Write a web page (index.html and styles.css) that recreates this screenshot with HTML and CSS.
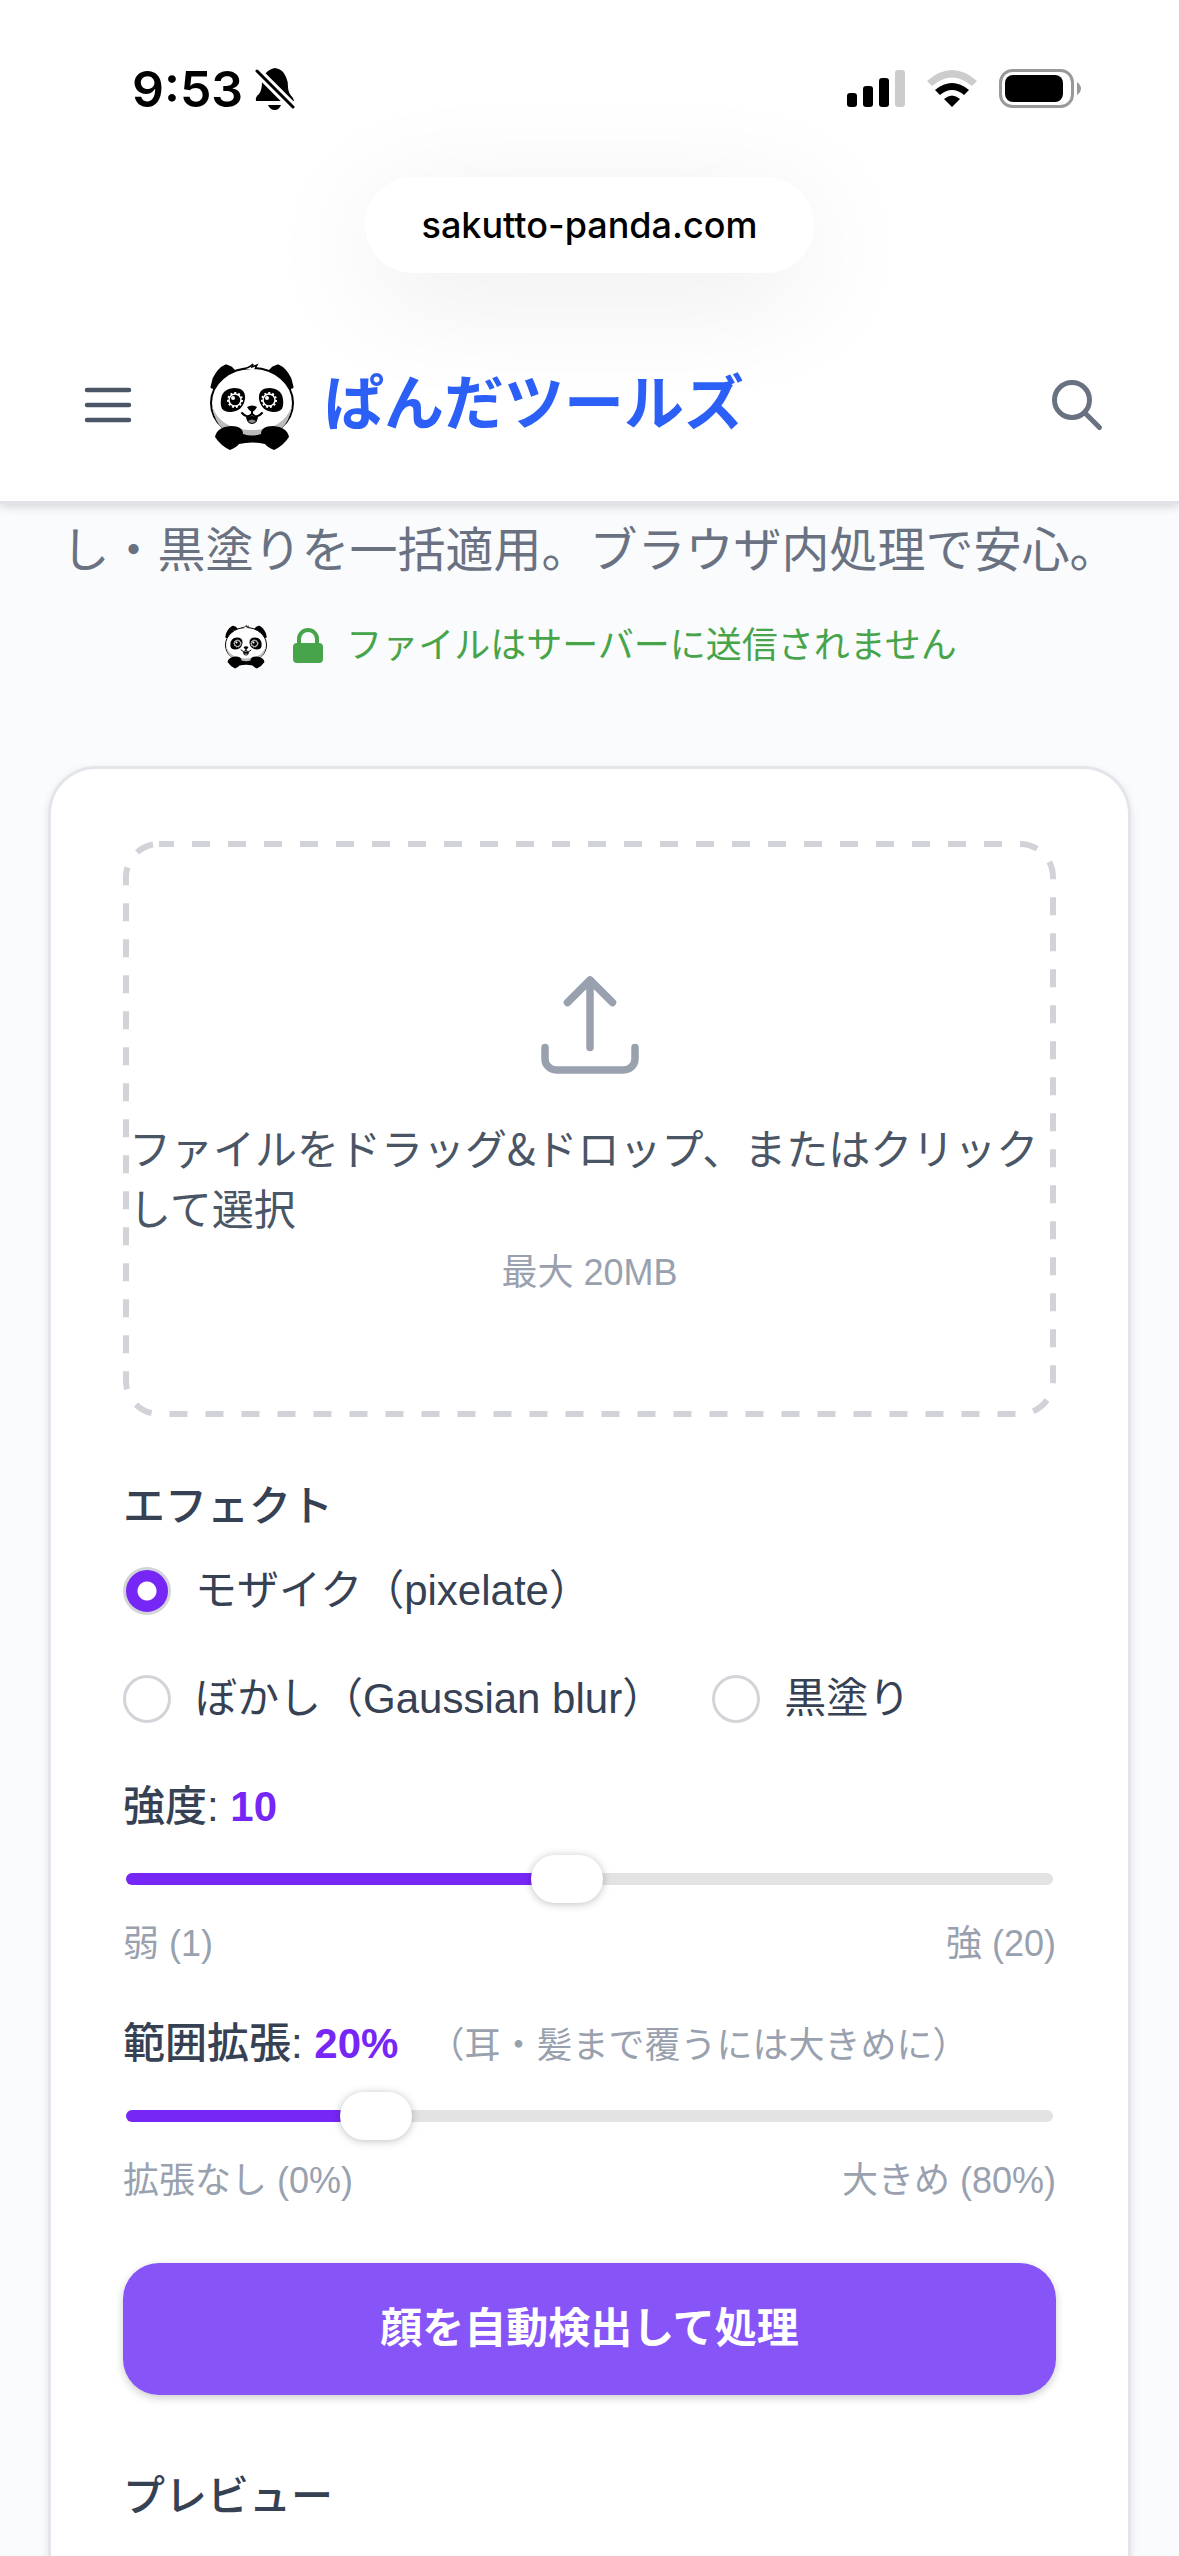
FILE: index.html
```html
<!DOCTYPE html>
<html lang="ja">
<head>
    <meta charset="UTF-8">
    <meta name="viewport" content="width=device-width, initial-scale=1.0">
    <title>ぱんだツールズ</title>
    <link rel="stylesheet" href="styles.css">
</head>
<body>
    <!-- Shared panda artwork -->
    <svg class="sprite" aria-hidden="true">
        <symbol id="panda" viewBox="0 0 96 96">
            <path d="M8 30 L10 22 Q15 12 22 9 L27 11 L30 14 L15 32 Z M88 30 L86 22 Q81 12 74 9 L69 11 L66 14 L81 32 Z" fill="#000" stroke="#000" stroke-width="3" stroke-linejoin="round"/>
            <ellipse cx="48" cy="46" rx="41" ry="35" fill="#fff" stroke="#000" stroke-width="2"/>
            <path d="M8 49 Q13 82 48 80 Q83 82 88 49 Q79 73 48 73 Q17 73 8 49Z" fill="#bbb"/>
            <path d="M39 12 Q45 11 49 7 L48 10 L53 8 L51 12" fill="#fff" stroke="#000" stroke-width="1.5"/>
            <path d="M17 49 Q15 32 30 31 Q42 31 41 42 Q39 54 27 55 Q18 55 17 49Z M79 49 Q81 32 66 31 Q54 31 55 42 Q57 54 69 55 Q78 55 79 49Z" fill="#000"/>
            <g fill="#000" stroke="#fff" stroke-width="1.5">
                <circle cx="31" cy="43" r="6"/>
                <circle cx="65" cy="43" r="6"/>
            </g>
            <g fill="none" stroke="#fff" stroke-width="2" stroke-dasharray="2 2">
                <circle cx="31" cy="43" r="7"/>
                <circle cx="65" cy="43" r="7"/>
            </g>
            <circle cx="29" cy="41" r="2" fill="#fff"/>
            <circle cx="63" cy="41" r="2" fill="#fff"/>
            <path d="M43 50 Q48 47 53 50 Q51 54 48 55 Q45 54 43 50Z" fill="#000"/>
            <path d="M48 54 V57 Q43 62 38 56 M48 57 Q53 62 58 56" fill="none" stroke="#000" stroke-width="2" stroke-linecap="round"/>
            <path d="M42 60 Q48 58 54 60 Q53 67 48 67 Q43 67 42 60Z" fill="#000"/>
            <path d="M44 64 Q48 61 52 64 Q48 68 44 64Z" fill="#888"/>
            <path d="M11 80 Q13 70 27 69 Q39 69 39 77 Q48 80 57 77 Q57 69 69 69 Q83 70 85 80 Q79 89 70 93 Q63 90 61 87 Q48 84 35 87 Q33 90 26 93 Q17 89 11 80Z" fill="#000"/>
        </symbol>
    </svg>

    <div class="top">
        <div class="status-bar">
            <div class="status-time">
                <span>9:53</span>
                <svg width="40" height="44" viewBox="0 0 40 44" aria-hidden="true">
                    <path d="M10 7 Q14 2 20 1 Q28 2 31 10 Q33 14 33 20 Q33 26 38 31 L39 34 H1 Q0 30 4 27 Q7 23 7 15 Z M13 38 H26 Q24 43 20 43 Q15 43 13 38Z"/>
                    <path d="M1 3 L38 40" stroke="#fff" stroke-width="9"/>
                    <path d="M2 4 L38 40" stroke="#000" stroke-width="3" stroke-linecap="round"/>
                </svg>
            </div>
            <div class="status-icons">
                <svg width="58" height="38" viewBox="0 0 58 38" aria-hidden="true">
                    <rect x="0" y="23" width="10" height="14" rx="3"/>
                    <rect x="16" y="16" width="10" height="21" rx="3"/>
                    <rect x="32" y="8" width="10" height="29" rx="3"/>
                    <rect x="48" y="0" width="10" height="37" rx="3" fill="#ccc"/>
                </svg>
                <svg width="50" height="38" viewBox="0 0 50 38" aria-hidden="true">
                    <path d="M0 11 Q25 -11 50 11 L45 16 Q25 -1 5 16Z" fill="#ccc"/>
                    <path d="M8 20 Q25 6 42 20 L37 25 Q25 15 13 25Z"/>
                    <path d="M17 29 Q25 22 33 29 L25 37Z"/>
                </svg>
                <svg width="83" height="40" viewBox="0 0 83 40" aria-hidden="true">
                    <rect x="1.5" y="1.5" width="72" height="36" rx="12" fill="none" stroke="#999" stroke-width="3"/>
                    <rect x="6" y="6" width="58" height="27" rx="8"/>
                    <path d="M78 13 Q82 16 82 19.500 Q82 23 78 26Z" fill="#999"/>
                </svg>
            </div>
        </div>

        <div class="url-pill">sakutto-panda.com</div>

        <header class="site-header">
            <button class="icon-btn" aria-label="メニュー">
                <svg width="72" height="72" viewBox="0 0 24 24" fill="none" stroke="#4a5565" stroke-width="1.5" stroke-linecap="round"><path d="M5 7h14M5 12h14M5 17h14"/></svg>
            </button>
            <a class="brand" href="#">
                <svg class="brand-logo" aria-hidden="true"><use href="#panda"/></svg>
                <span>ぱんだツールズ</span>
            </a>
            <button class="icon-btn" aria-label="検索">
                <svg width="60" height="60" viewBox="0 0 24 24" fill="none" stroke="#6a7282" stroke-width="2" stroke-linecap="round" stroke-linejoin="round"><path d="M21 21l-6-6m2-5a7 7 0 11-14 0 7 7 0 0114 0z"/></svg>
            </button>
        </header>
    </div>

    <main>
        <p class="intro">し・黒塗りを一括適用。ブラウザ内処理で安心。</p>
        <p class="notice">
            <svg class="notice-panda" aria-hidden="true"><use href="#panda"/></svg>
            <svg width="32" height="36" viewBox="0 0 32 36" aria-hidden="true">
                <path d="M7 16 V11 a9 9 0 0 1 18 0 V16" fill="none" stroke="#47a44a" stroke-width="4"/>
                <rect x="1" y="15" width="30" height="20" rx="4" fill="#47a44a"/>
            </svg>
            <span>ファイルはサーバーに送信されません</span>
        </p>

        <div class="card">
            <div class="dropzone">
                <svg class="dropzone-border" aria-hidden="true"><rect x="3" y="3" rx="33"/></svg>
                <svg width="120" height="120" viewBox="0 0 24 24" fill="none" stroke="#99a1af" stroke-width="1.5" stroke-linecap="round" stroke-linejoin="round" aria-hidden="true">
                    <path d="M3 16.500v2.250A2.250 2.250 0 005.250 21h13.500A2.250 2.250 0 0021 18.750V16.500m-13.500-9L12 3m0 0l4.500 4.500M12 3v13.500"/>
                </svg>
                <p class="dropzone-text">ファイルをドラッグ&amp;ドロップ、またはクリックして選択</p>
                <p class="dropzone-hint">最大 20MB</p>
            </div>

            <fieldset class="effects">
                <legend>エフェクト</legend>
                <div class="radio-row">
                    <label><input type="radio" name="effect" checked>モザイク（pixelate）</label>
                    <label><input type="radio" name="effect">ぼかし（Gaussian blur）</label>
                    <label><input type="radio" name="effect">黒塗り</label>
                </div>
            </fieldset>

            <div class="field">
                <label for="strength">強度: <b>10</b></label>
                <input class="strength" type="range" id="strength" min="1" max="20" value="10">
                <div class="scale"><span>弱 (1)</span><span>強 (20)</span></div>
            </div>

            <div class="field">
                <label for="expand">範囲拡張: <b>20%</b><small>（耳・髪まで覆うには大きめに）</small></label>
                <input class="expand" type="range" id="expand" min="0" max="80" value="20">
                <div class="scale"><span>拡張なし (0%)</span><span>大きめ (80%)</span></div>
            </div>

            <button class="run-btn">顔を自動検出して処理</button>

            <h2>プレビュー</h2>
        </div>
    </main>
</body>
</html>
```
FILE: styles.css
```css
* {
    box-sizing: border-box;
}
body {
    display: flex;
    flex-direction: column;
    min-height: 100vh;
    margin: 0;
    background-color: #f9fbfd;
    color: #364153;
    font-family: "Liberation Sans", "Noto Sans CJK JP", sans-serif;
    font-size: 42px;
    line-height: 60px;
}
p, h2 {
    margin: 0;
}
svg {
    display: block;
    flex-shrink: 0;
}
button {
    padding: 0;
    border: none;
    background: none;
    font-family: inherit;
    cursor: pointer;
}
.sprite {
    position: absolute;
    width: 0;
    height: 0;
}

/* Top of the screen */
.top {
    background-color: #fff;
    border-bottom: 3px solid #e2e3e9;
    box-shadow: 0 3px 9px rgba(0, 0, 0, 0.15);
    z-index: 1;
}
.status-bar {
    display: flex;
    justify-content: space-between;
    align-items: center;
    height: 177px;
    padding: 0 97px 0 132px;
}
.status-time, .status-icons {
    display: flex;
    align-items: center;
}
.status-time {
    gap: 12px;
    color: #000;
    font-family: Inter, sans-serif;
    font-size: 50px;
    font-weight: 600;
}
.status-icons {
    gap: 22px;
}
.url-pill {
    width: fit-content;
    margin: 0 auto;
    padding: 18px 57px;
    border-radius: 48px;
    background-color: #fff;
    box-shadow: 0 24px 120px rgba(0, 0, 0, 0.08);
    color: #000;
    font-family: Inter, sans-serif;
    font-size: 36px;
    font-weight: 500;
}
.site-header {
    display: flex;
    align-items: center;
    height: 228px;
    padding: 36px 72px 0;
}
.brand {
    display: flex;
    align-items: center;
    gap: 24px;
    flex: 1;
    margin-left: 60px;
    color: #2b5ff5;
    font-size: 60px;
    font-weight: 700;
    text-decoration: none;
}
.brand-logo {
    width: 96px;
    height: 96px;
}

/* Intro */
main {
    display: flex;
    flex-direction: column;
    flex: 1;
    padding: 8px 48px 0;
}
.intro {
    color: #6a7282;
    font-size: 48px;
    line-height: 78px;
    text-align: center;
    white-space: nowrap;
}
.notice {
    display: flex;
    justify-content: center;
    align-items: center;
    gap: 22px;
    margin-top: 32px;
    color: #47a44a;
    font-size: 36px;
    line-height: 48px;
}
.notice-panda {
    width: 48px;
    height: 48px;
}

/* Tool card */
.card {
    flex: 1;
    margin-top: 96px;
    padding: 72px;
    border: 3px solid #e4e5ea;
    border-bottom: none;
    border-radius: 48px 48px 0 0;
    background-color: #fff;
    box-shadow: 0 3px 9px rgba(0, 0, 0, 0.1);
}
.dropzone {
    position: relative;
    display: flex;
    flex-direction: column;
    align-items: center;
    justify-content: center;
    height: 576px;
    padding: 4px 6px 0;
}
.dropzone-border {
    position: absolute;
    inset: 0;
    width: 100%;
    height: 100%;
}
.dropzone-border rect {
    width: calc(100% - 6px);
    height: calc(100% - 6px);
    fill: none;
    stroke: #d1d3d9;
    stroke-width: 6px;
    stroke-dasharray: 18px 18px;
    stroke-dashoffset: 3px;
}
.dropzone-text {
    margin-top: 32px;
    color: #4a5565;
    font-family: "Noto Sans CJK JP", sans-serif;
}
.dropzone-hint {
    margin-top: 12px;
    color: #99a1af;
    font-size: 36px;
    line-height: 48px;
}
.effects {
    margin: 60px 0 0;
    padding: 0;
    border: none;
}
.effects legend {
    padding: 0;
    font-weight: 500;
}
.radio-row {
    display: flex;
    flex-wrap: wrap;
    gap: 48px;
    margin-top: 24px;
}
.radio-row label {
    display: flex;
    align-items: center;
    gap: 24px;
}
/* keeps the first option on a line of its own */
.radio-row label:first-child {
    margin-right: 96px;
}
.radio-row input {
    appearance: none;
    width: 48px;
    height: 48px;
    margin: 0;
    border: 3px solid #d3d4d9;
    border-radius: 50%;
    background-color: #fff;
}
.radio-row input:checked {
    background: radial-gradient(circle, #fff 9px, #7727f5 10px);
}
.field {
    margin-top: 46px;
}
.effects + .field {
    margin-top: 48px;
}
.field label {
    display: block;
    height: 60px;
    font-weight: 500;
}
.field b {
    color: #7727f5;
    font-weight: 700;
}
.field small {
    margin-left: 30px;
    color: #99a1af;
    font-size: 36px;
    font-weight: 400;
}
.field input {
    appearance: none;
    display: block;
    width: calc(100% - 6px);
    height: 48px;
    margin: 18px 3px 0;
    background: none;
}
.field input::-webkit-slider-runnable-track {
    height: 12px;
    border-radius: 6px;
}
.strength::-webkit-slider-runnable-track {
    background: linear-gradient(to right, #7727f5 47%, #e3e3e3 47%);
}
.expand::-webkit-slider-runnable-track {
    background: linear-gradient(to right, #7727f5 26%, #e3e3e3 26%);
}
.field input::-webkit-slider-thumb {
    appearance: none;
    width: 72px;
    height: 48px;
    margin-top: -18px;
    border-radius: 24px;
    background-color: #fff;
    box-shadow: 0 1px 8px rgba(0, 0, 0, 0.25);
}
.scale {
    display: flex;
    justify-content: space-between;
    margin-top: 17px;
    color: #99a1af;
    font-size: 36px;
    line-height: 48px;
}
.run-btn {
    display: block;
    width: 100%;
    height: 132px;
    margin: 58px 0 72px;
    border-radius: 36px;
    background-color: #8755f7;
    box-shadow: 0 3px 9px rgba(0, 0, 0, 0.2);
    color: #fff;
    font-size: 42px;
    font-weight: 600;
    line-height: 60px;
}
.card h2 {
    font-size: 42px;
    font-weight: 500;
}
```
